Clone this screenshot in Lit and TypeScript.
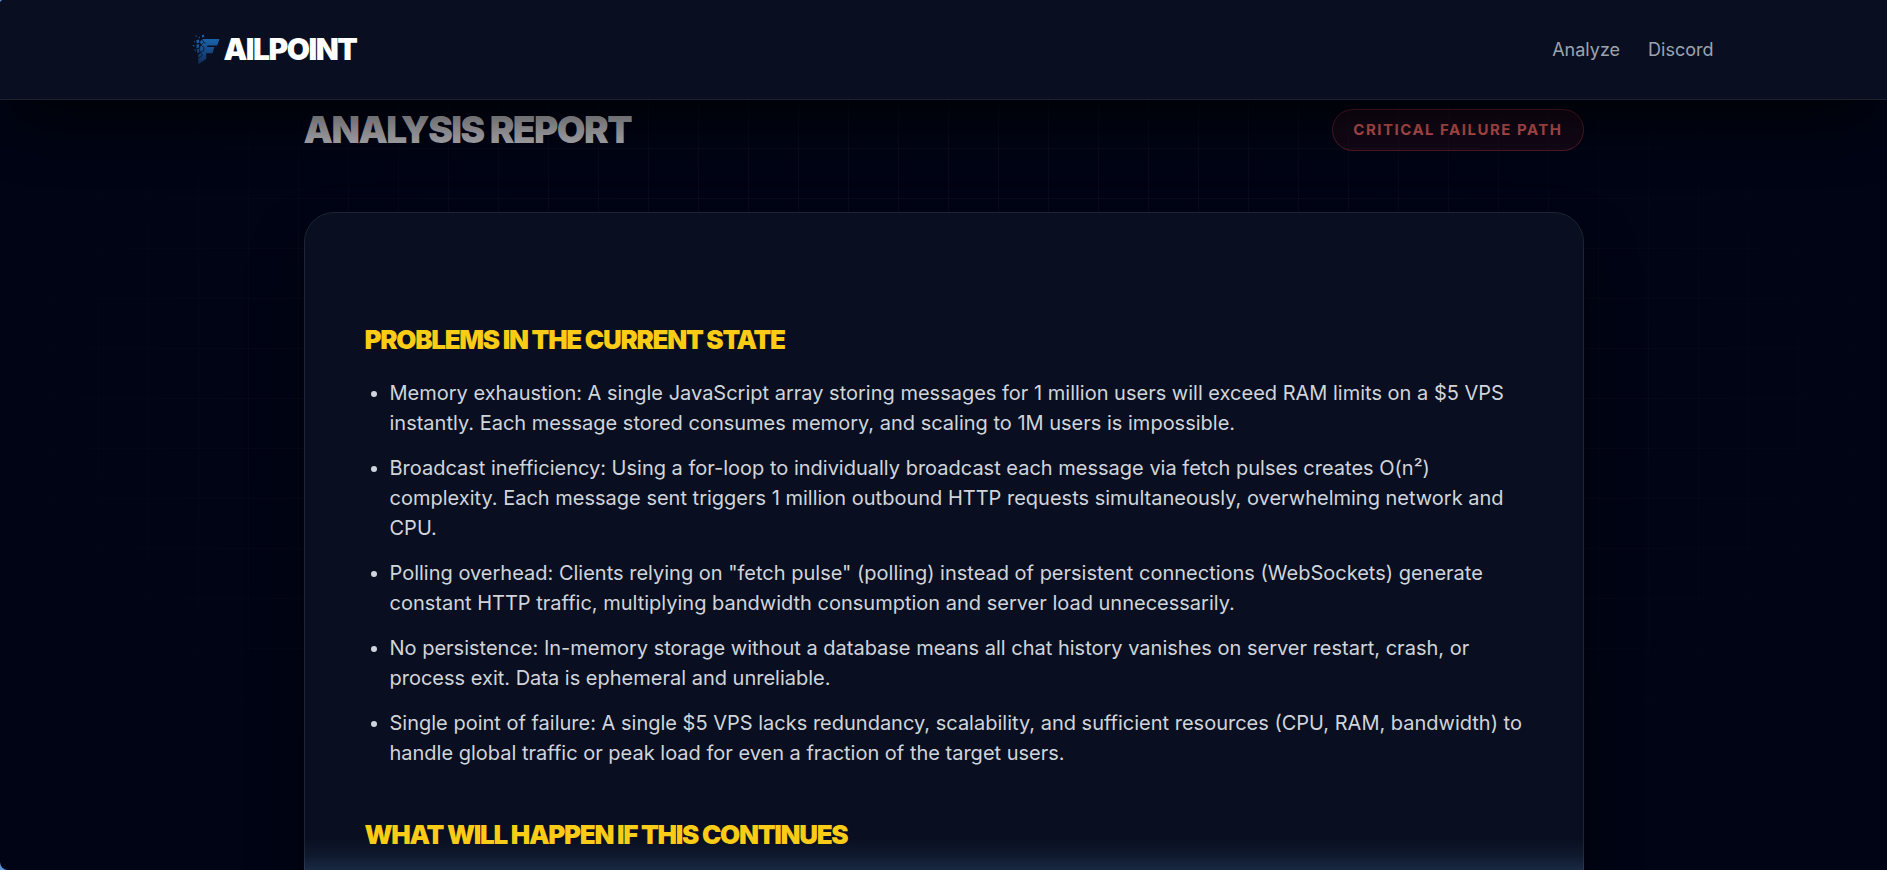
import { LitElement, html, css, svg } from "lit";
import { customElement } from "lit/decorators.js";

interface Section {
  title: string;
  items: string[];
}

const SECTIONS: Section[] = [
  {
    title: "Problems in the current state",
    items: [
      "Memory exhaustion: A single JavaScript array storing messages for 1 million users will exceed RAM limits on a $5 VPS instantly. Each message stored consumes memory, and scaling to 1M users is impossible.",
      "Broadcast inefficiency: Using a for-loop to individually broadcast each message via fetch pulses creates O(n²) complexity. Each message sent triggers 1 million outbound HTTP requests simultaneously, overwhelming network and CPU.",
      'Polling overhead: Clients relying on "fetch pulse" (polling) instead of persistent connections (WebSockets) generate constant HTTP traffic, multiplying bandwidth consumption and server load unnecessarily.',
      "No persistence: In-memory storage without a database means all chat history vanishes on server restart, crash, or process exit. Data is ephemeral and unreliable.",
      "Single point of failure: A single $5 VPS lacks redundancy, scalability, and sufficient resources (CPU, RAM, bandwidth) to handle global traffic or peak load for even a fraction of the target users.",
    ],
  },
  { title: "What will happen if this continues", items: [] },
];

// Broken "F" emblem: solid bars on the right, shards scattering to the left.
const logo = svg`
  <defs>
    <linearGradient id="mark" gradientUnits="userSpaceOnUse" x1="0" y1="4" x2="0" y2="30">
      <stop offset="0" stop-color="#1b65ad" />
      <stop offset="0.5" stop-color="#164a86" />
      <stop offset="1" stop-color="#0e2b57" />
    </linearGradient>
  </defs>
  <g fill="url(#mark)">
    <path d="M10.5 5 H27.5 L25.2 11.4 H15.4 L14.8 13 H22.4 L20.4 19.2 H14.2 V25 L6.3 30.2 V21 L9 18.4 L7.4 15 L9.2 10.4 L7.8 8 Z" />
    <path d="M4.2 6.2 L7 5.6 L7.4 8.6 L5 9.4 Z" />
    <path d="M4.4 10.6 L7.2 10.2 L7 13.4 L4.6 14.4 Z" />
    <path d="M4.8 15.6 L6.8 15 L7.6 17.8 L5.6 19.4 Z" />
    <path d="M9.6 1.4 L11.8 0.4 L12.2 2.4 L10.6 3.8 Z" />
    <path d="M3.2 1.6 L4.6 1.4 L4.4 3.2 Z" />
    <path d="M6.4 2.8 L8 3 L7.4 4.6 Z" />
    <path d="M0 11 L2.8 11.2 L2 12.8 Z" />
    <path d="M2 15.6 L3.8 15.4 L3.4 17.4 Z" />
    <path d="M1.6 7.4 L3 7 L3 8.4 Z" />
  </g>
  <path
    d="M10 5 L11.6 8.4 L13.6 9 M11.6 8.4 L9 11.4 L12 13.4 M12 13.4 L11.6 17 M11.6 17 L8.4 18 M8.6 18.4 L10.4 21.4 L6 24.4"
    fill="none" stroke="#090f20" stroke-width="0.7" />`;

@customElement("app-root")
export class AppRoot extends LitElement {
  static styles = css`
    :host {
      display: block;
      height: 100vh;
      background: #5a94d8;
      font-family: Inter, "Liberation Sans", sans-serif;
      color: #d1d5db;
    }
    * {
      box-sizing: border-box;
    }
    .shell {
      position: relative;
      height: 100%;
      overflow: hidden;
      border-radius: 4px 0 0 8px;
      background: #010414;
    }
    .grid {
      position: absolute;
      inset: 0;
      background-image: linear-gradient(to right, rgba(255, 255, 255, 0.03) 1px, transparent 1px),
        linear-gradient(to bottom, rgba(255, 255, 255, 0.03) 1px, transparent 1px);
      background-size: 50px 50px;
      background-position: -2px -2px;
      mask-image: radial-gradient(ellipse at 50% 45%, #000 35%, transparent 78%);
    }
    .bar {
      position: relative;
      z-index: 2;
      background: #090f20;
      border-bottom: 1px solid #1e212e;
      box-shadow: 0 30px 60px -14px rgba(0, 0, 0, 0.75);
    }
    .bar-inner {
      max-width: 1600px;
      height: 99px;
      margin: 0 auto;
      padding: 0 30px;
      display: flex;
      align-items: center;
      justify-content: space-between;
    }
    .brand {
      display: flex;
      align-items: center;
      padding-bottom: 2px;
      color: #fff;
      text-decoration: none;
      font-size: 30px;
      line-height: 36px;
      font-weight: 900;
      letter-spacing: -0.05em;
    }
    .mark {
      width: 50px;
      height: 50px;
    }
    .links {
      display: flex;
      gap: 28px;
    }
    .link {
      color: #9ca3af;
      text-decoration: none;
      font-size: 18px;
      line-height: 24px;
    }
    .page {
      position: relative;
      max-width: 1280px;
      margin: 0 auto;
    }
    .heading {
      display: flex;
      align-items: center;
      justify-content: space-between;
      padding: 9px 0 61px;
    }
    .title {
      margin: 0;
      font-size: 37px;
      line-height: 40px;
      font-weight: 900;
      letter-spacing: -0.04em;
      text-transform: uppercase;
      color: #b0b0b5;
    }
    .badge {
      padding: 10px 20px;
      border: 1px solid rgba(239, 68, 68, 0.3);
      border-radius: 24px;
      background: rgba(239, 68, 68, 0.08);
      color: #c85555;
      font-size: 15px;
      line-height: 20px;
      font-weight: 700;
      letter-spacing: 0.1em;
      text-transform: uppercase;
    }
    .card {
      padding: 60px 60px 120px;
      border: 1px solid #1e2231;
      border-radius: 30px;
      background: #090f20;
      box-shadow: 0 30px 60px -12px rgba(0, 0, 0, 0.75);
    }
    .section-title {
      margin: 50px 0 21px;
      font-size: 26px;
      line-height: 34px;
      font-weight: 900;
      letter-spacing: -0.05em;
      text-transform: uppercase;
      color: #facc15;
    }
    .list {
      margin: 0;
      padding-left: 25px;
      font-size: 20px;
      line-height: 30px;
    }
    .item {
      margin-bottom: 15px;
    }
    .glow {
      position: absolute;
      z-index: 1;
      bottom: 0;
      left: 0;
      right: 0;
      height: 32px;
      max-width: 1280px;
      margin: 0 auto;
      background: linear-gradient(
        to top,
        rgba(100, 165, 240, 0.17),
        rgba(100, 165, 240, 0.06) 50%,
        rgba(100, 165, 240, 0)
      );
    }
  `;

  render() {
    return html`
      <div class="shell">
        <div class="grid"></div>
        <header class="bar">
          <div class="bar-inner">
            <a class="brand" href="#">
              <svg class="mark" viewBox="-18 -10 50 50" aria-hidden="true">${logo}</svg>
              <span>AILPOINT</span>
            </a>
            <nav class="links">
              <a class="link" href="#analyze">Analyze</a>
              <a class="link" href="#discord">Discord</a>
            </nav>
          </div>
        </header>
        <main class="page">
          <div class="heading">
            <h1 class="title">Analysis report</h1>
            <span class="badge">Critical failure path</span>
          </div>
          <article class="card">
            ${SECTIONS.map(
              (s) => html`
                <h2 class="section-title">${s.title}</h2>
                ${s.items.length
                  ? html`<ul class="list">
                      ${s.items.map((i) => html`<li class="item">${i}</li>`)}
                    </ul>`
                  : null}
              `
            )}
          </article>
        </main>
        <div class="glow"></div>
      </div>
    `;
  }
}
